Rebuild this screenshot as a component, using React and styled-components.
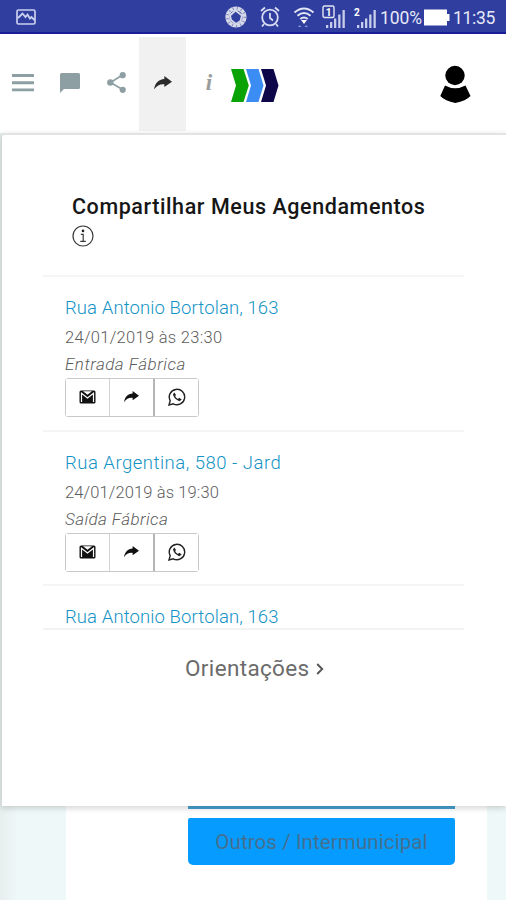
import React from "react";
import styled, { createGlobalStyle, css } from "styled-components";

const GlobalStyle = createGlobalStyle`
  * {
    box-sizing: border-box;
  }

  body {
    margin: 0;
    background-color: #eff8f8;
    font-family: Roboto, "Liberation Sans", sans-serif;
    overflow: hidden;
  }

  svg {
    display: block;
    flex: none;
  }
`;

const Screen = styled.div`
  width: 506px;
  height: 900px;
  display: flex;
  flex-direction: column;
  overflow: hidden;
  background: linear-gradient(to right, #e6eeee, #eff8f8 18px);
`;

const StatusBar = styled.header`
  flex: none;
  height: 34px;
  display: flex;
  align-items: center;
  padding: 2px 11px 0 16px;
  background-color: #303f9f;
  border-bottom: 2px solid #1b1d98;
  color: #e6e8f7;
`;

const StatusIcons = styled.div`
  margin-left: auto;
  display: flex;
  align-items: center;
`;

const StatusGap = styled.span`
  width: ${(props) => props.$size}px;
`;

const StatusText = styled.span`
  font-size: 17.5px;
  line-height: 20px;
  width: ${(props) => props.$width}px;
  letter-spacing: ${(props) => props.$spacing}px;
  margin-left: ${(props) => props.$left}px;
  margin-top: 1px;
  white-space: nowrap;
`;

const Toolbar = styled.nav`
  flex: none;
  height: 99px;
  display: flex;
  align-items: stretch;
  background-color: white;
`;

const ToolbarItem = styled.button`
  width: ${(props) => props.$width || 46}px;
  border: 0;
  padding: 0 0 3px;
  margin: 3px 0 2px;
  display: flex;
  align-items: center;
  justify-content: center;
  background-color: ${(props) => (props.$active ? "#f1f1f1" : "transparent")};
  color: ${(props) => (props.$active ? "#2b2b2b" : "#8e9fa4")};
`;

const InfoLetter = styled.span`
  font-family: "Liberation Serif", serif;
  font-style: italic;
  font-weight: bold;
  font-size: 23px;
  color: #9a9c9b;
`;

const Brand = styled.div`
  margin-left: -1px;
  padding-top: 35px;
`;

const UserButton = styled.div`
  margin-left: auto;
  padding: 31px 35px 0 0;
`;

const Panel = styled.main`
  flex: none;
  height: 673px;
  margin-left: 1px;
  padding: 58px 42px 0 43px;
  background-color: white;
  border-top: 2px solid #e2e3e3;
  border-left: 1px solid #d4d8d8;
  border-top-left-radius: 4px;
  box-shadow: 0 2px 6px rgba(0, 0, 0, 0.18);
  position: relative;
`;

const PanelHeader = styled.div`
  height: 82px;
  padding-left: 27px;
`;

const Title = styled.h1`
  margin: 0;
  font-size: 21.5px;
  line-height: 28px;
  font-weight: 500;
  letter-spacing: 0.58px;
  color: #161616;
  white-space: nowrap;
`;

const TitleIcon = styled.div`
  padding-top: 4px;
`;

const List = styled.ul`
  list-style: none;
  margin: 0 0 0 -2px;
  padding: 0;
  height: 355px;
  width: 421px;
  overflow: hidden;
  border-bottom: 2px solid #f3f3f3;
`;

const Row = styled.li`
  height: 154.7px;
  padding: 17px 0 0 22px;
  border-top: 2px solid #f5f5f5;

  &:last-child {
    height: auto;
  }
`;

const textLine = css`
  margin: 0;
  white-space: nowrap;
  letter-spacing: ${(props) => props.$spacing}px;
`;

const Address = styled.p`
  ${textLine}
  font-size: 18.5px;
  line-height: 28px;
  font-weight: 300;
  color: #1493c6;
`;

const DateTime = styled.p`
  ${textLine}
  margin-top: 3px;
  font-size: 16.5px;
  line-height: 26px;
  font-weight: 300;
  color: #5c5c5c;
`;

const Kind = styled.p`
  ${textLine}
  margin-bottom: 1px;
  font-size: 17px;
  line-height: 26px;
  font-weight: 300;
  font-style: italic;
  color: #5c5c5c;
`;

const ButtonGroup = styled.div`
  display: flex;
  width: 134px;
  height: 39px;
  border: 1.5px solid #c9c9c9;
  border-radius: 3px;
`;

const ShareButton = styled.button`
  flex: 1;
  display: flex;
  align-items: center;
  justify-content: center;
  padding: 0 0 1px;
  border: 0;
  background: white;
  color: #111;

  & + & {
    border-left: 1px solid #d2d2d2;
  }

  &:last-child {
    border-left: 2px solid #b5b5b5;
  }
`;

const MoreLink = styled.a`
  display: flex;
  align-items: center;
  margin: 22px 0 0 140px;
  font-size: 22.5px;
  line-height: 32px;
  letter-spacing: 0.35px;
  color: #6b6b6b;

  svg {
    margin: 2px 0 0 6px;
  }
`;

const Underlay = styled.section`
  flex: 1;
  margin: 0 19px 0 66px;
  padding: 0 32px 0 122px;
  background-color: white;
`;

const ButtonEdge = styled.div`
  height: 3px;
  margin-bottom: 9px;
  background-color: #459fce;
`;

const BlueButton = styled.button`
  display: block;
  width: 267px;
  height: 47px;
  padding: 0;
  border: 0;
  border-radius: 2px 2px 5px 5px;
  background-color: #069cff;
  color: #456f8f;
  font-family: inherit;
  font-size: 20.5px;
  letter-spacing: 0.1px;
`;

const PictureIcon = () => (
  <svg width="20" height="16" viewBox="0 0 20 16" fill="none" stroke="#c9d0ef">
    <rect x="1" y="1" width="18" height="14" rx="1.5" strokeWidth="1.7" />
    <path d="M2 9l4.500-4.500 3 3.500 2-2.500 2.500 4 1.500-1.500 3 3" strokeWidth="1.8" />
  </svg>
);

const SyncIcon = () => (
  <svg width="24" height="22" viewBox="0 0 24 22" fill="none" stroke="#d6d9e8">
    <circle cx="12" cy="11" r="8.600" strokeWidth="4" />
    <circle cx="12" cy="11" r="8.800" strokeWidth="2.600" stroke="#8189c2" strokeDasharray="1 3.200" />
    <path d="M6 9.500l5.500-5 6.500 5-1.500 5.500-4.500 3-5-4z" strokeWidth="1.800" />
  </svg>
);

const AlarmIcon = () => (
  <svg width="22" height="22" viewBox="0 0 22 22" fill="none" stroke="#d9dcf2" strokeWidth="1.8">
    <circle cx="11" cy="11.500" r="7.800" />
    <path d="M11 7v5l3 2.500M2 5l4-3.500M20 5l-4-3.500M5 18l-2 2.500M17 18l2 2.500" />
  </svg>
);

const WifiIcon = () => (
  <svg width="22" height="22" viewBox="0 0 22 22" fill="none" stroke="#e3e6f5" strokeWidth="1.900">
    <path d="M1.500 6.500q9.500-8 19 0M4.500 9.800q6.500-5.500 13 0M7.300 13q3.700-3.200 7.400 0" />
    <path d="M8 14h6l-3 4z" fill="#fff" stroke="none" />
    <path d="M5 21l1.700-2 1.700 2zM11.500 21l1.700-2 1.700 2z" fill="#8b95d2" stroke="none" />
  </svg>
);

const SimText = styled.text`
  font: bold 10px Roboto, sans-serif;
  fill: #fff;
`;

const SignalIcon = ({ sim }) => (
  <svg width="24" height="25" viewBox="0 0 24 25">
    {sim === 1 && (
      <rect x="1" y="1" width="11" height="11.500" rx="1.500" fill="none" stroke="#e3e6f5" strokeWidth="1.400" />
    )}
    <SimText x={sim === 1 ? 3.7 : 1} y="10.500">
      {sim}
    </SimText>
    <path d="M4 20h2.300v3H4zM8 17h2.300v6H8zM12 13.500h2.300V23H12zM16.200 9.500h2.300V23h-2.300zM20.500 5h2.300v18h-2.300z" fill="#c7cdea" />
  </svg>
);

const BatteryIcon = () => (
  <svg width="27" height="17" viewBox="0 0 27 17">
    <path d="M1 .5h23V5h2.500v7H24v4.500H1z" fill="#fff" />
  </svg>
);

const MenuIcon = () => (
  <svg width="22" height="20" viewBox="0 0 22 20" fill="currentColor">
    <path d="M0 1h22v2.900H0zM0 8.300h22v2.900H0zM0 15.400h22v2.900H0z" />
  </svg>
);

const ChatIcon = () => (
  <svg width="20" height="20" viewBox="0 0 20 20">
    <path d="M1.500 0h17q1.500 0 1.500 1.500v13q0 1.500-1.500 1.500H4l-4 4V1.500Q0 0 1.500 0z" fill="currentColor" />
  </svg>
);

const ShareIcon = () => (
  <svg width="19" height="21" viewBox="0 0 19 21" fill="currentColor">
    <path d="M15.500 3L3.500 10.500l12 7" fill="none" stroke="currentColor" strokeWidth="1.700" />
    <circle cx="15.700" cy="3.200" r="3.100" />
    <circle cx="3.300" cy="10.500" r="3.200" />
    <circle cx="15.700" cy="17.800" r="3.100" />
  </svg>
);

const ForwardIcon = ({ width = 18 }) => (
  <svg width={width} height={width * 0.75} viewBox="0 0 20 15">
    <path d="M11.500 0L20 6.300l-8.500 6V9.200C6.500 8.800 3 10.500 0 15 1 8 5 3.600 11.500 3.200z" fill="currentColor" />
  </svg>
);

const BrandLogo = () => (
  <svg width="48" height="33" viewBox="0 0 48 33">
    <path d="M0 0h12.500l5.300 16.500L12.500 33H0l5-16.500z" fill="#0aa306" />
    <path d="M15 0h12.500l5 16.500-5 16.500H15l5-16.500z" fill="#3b8df4" />
    <path d="M30 0h12.500l5 16.500-5 16.500H30l5-16.500z" fill="#0d0749" />
  </svg>
);

const UserIcon = () => (
  <svg width="31" height="38" viewBox="0 0 31 38">
    <circle cx="15" cy="10.500" r="9.700" fill="#000" />
    <path d="M5 20.500q10 5.500 20.500 0l5 10.500q-4.500 4.800-15.200 7Q5 36 .3 31z" fill="#000" />
  </svg>
);

const InfoCircleIcon = () => (
  <svg width="22" height="22" viewBox="0 0 22 22" fill="none" stroke="#3a3a3a" strokeWidth="1.200">
    <circle cx="11" cy="11" r="10" />
    <path d="M8.800 9.300h2.400v7M8.300 16.400h5.500" />
    <circle cx="11" cy="5.900" r="1.300" fill="#222" stroke="none" />
  </svg>
);

const MailIcon = () => (
  <svg width="17" height="14" viewBox="0 0 17 14">
    <rect x=".5" y=".5" width="16" height="13" rx="1.500" fill="#111" />
    <path d="M2.500 12V3.200L8.500 8l6-4.800V12" fill="none" stroke="#fff" strokeWidth="1.200" />
    <path d="M4 1.300h9L8.500 4.800z" fill="#fff" />
  </svg>
);

const WhatsappIcon = () => (
  <svg width="18" height="18" viewBox="0 0 18 18">
    <path d="M1 17l1.200-4.300A7.700 7.700 0 1 1 5.300 15.800z" fill="none" stroke="#222" strokeWidth="1.400" />
    <path d="M6.400 4.600L5 6.200q.5 4.400 6.300 7l2.500-1.800-2.600-1.600-1.300 1.200Q8 10 7.100 8.100L8 7z" fill="#222" />
  </svg>
);

const ChevronIcon = () => (
  <svg width="8" height="12" viewBox="0 0 8 12" fill="none" stroke="#555" strokeWidth="1.900">
    <path d="M1.200 1l5 5-5 5" />
  </svg>
);

const appointments = [
  {
    address: "Rua Antonio Bortolan, 163",
    date: "24/01/2019 às 23:30",
    kind: "Entrada Fábrica",
    spacing: [0.1, 0.3, 0.48],
  },
  {
    address: "Rua Argentina, 580 - Jard",
    date: "24/01/2019 às 19:30",
    kind: "Saída Fábrica",
    spacing: [0.5, 0.12, 0.4],
  },
  {
    address: "Rua Antonio Bortolan, 163",
    spacing: [0.1],
  },
];

const Appointment = ({ address, date, kind, spacing }) => (
  <Row>
    <Address $spacing={spacing[0]}>{address}</Address>
    {date && (
      <>
        <DateTime $spacing={spacing[1]}>{date}</DateTime>
        <Kind $spacing={spacing[2]}>{kind}</Kind>
        <ButtonGroup>
          <ShareButton>
            <MailIcon />
          </ShareButton>
          <ShareButton>
            <ForwardIcon width={15} />
          </ShareButton>
          <ShareButton>
            <WhatsappIcon />
          </ShareButton>
        </ButtonGroup>
      </>
    )}
  </Row>
);

const App = () => {
  return (
    <Screen>
      <GlobalStyle />
      <StatusBar>
        <PictureIcon />
        <StatusIcons>
          <SyncIcon />
          <StatusGap $size={11} />
          <AlarmIcon />
          <StatusGap $size={12} />
          <WifiIcon />
          <StatusGap $size={7} />
          <SignalIcon sim={1} />
          <StatusGap $size={7} />
          <SignalIcon sim={2} />
          <StatusText $width={41} $left={3} $spacing={-0.1}>
            100%
          </StatusText>
          <StatusGap $size={2} />
          <BatteryIcon />
          <StatusText $width={42} $left={3} $spacing={-0.3}>
            11:35
          </StatusText>
        </StatusIcons>
      </StatusBar>
      <Toolbar>
        <ToolbarItem>
          <MenuIcon />
        </ToolbarItem>
        <ToolbarItem $width={47}>
          <ChatIcon />
        </ToolbarItem>
        <ToolbarItem>
          <ShareIcon />
        </ToolbarItem>
        <ToolbarItem $active $width={47}>
          <ForwardIcon />
        </ToolbarItem>
        <ToolbarItem>
          <InfoLetter>i</InfoLetter>
        </ToolbarItem>
        <Brand>
          <BrandLogo />
        </Brand>
        <UserButton>
          <UserIcon />
        </UserButton>
      </Toolbar>
      <Panel>
        <PanelHeader>
          <Title>Compartilhar Meus Agendamentos</Title>
          <TitleIcon>
            <InfoCircleIcon />
          </TitleIcon>
        </PanelHeader>
        <List>
          {appointments.map((appointment, index) => (
            <Appointment key={index} {...appointment} />
          ))}
        </List>
        <MoreLink>
          Orientações
          <ChevronIcon />
        </MoreLink>
      </Panel>
      <Underlay>
        <ButtonEdge />
        <BlueButton>Outros / Intermunicipal</BlueButton>
      </Underlay>
    </Screen>
  );
};

export default App;
